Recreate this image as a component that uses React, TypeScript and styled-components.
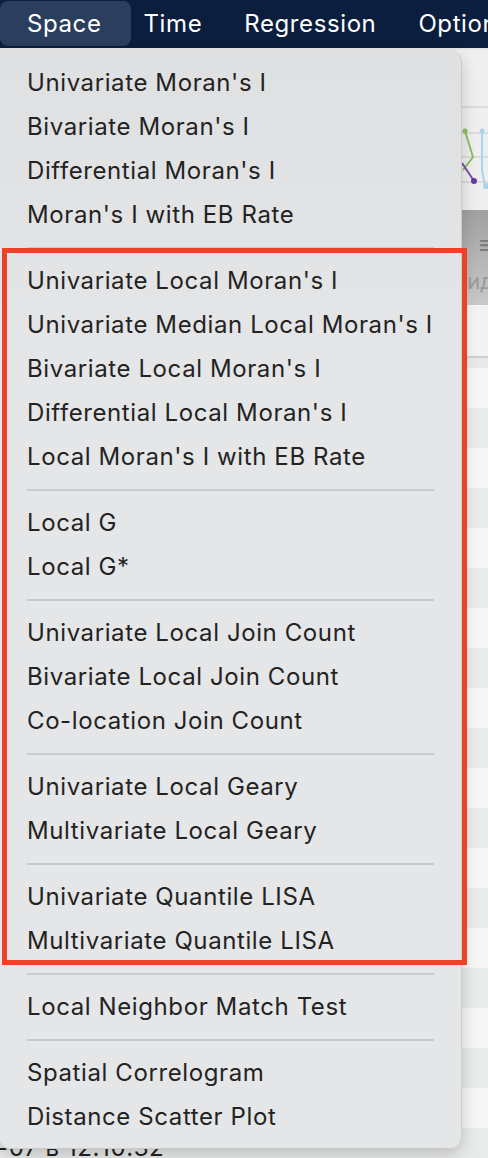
import React from "react";
import styled, { createGlobalStyle } from "styled-components";

const GlobalStyle = createGlobalStyle`
    html, body {
        margin: 0;
        padding: 0;
        background: #f4f4f4;
        overflow: hidden;
    }
    * {
        box-sizing: border-box;
    }
`;

const Screen = styled.div`
    position: relative;
    width: 488px;
    height: 1158px;
    overflow: hidden;
    font-family: Inter, "Noto Sans", "Liberation Sans", sans-serif;
`;

const MenuBar = styled.div`
    display: flex;
    align-items: center;
    height: 48px;
    padding-left: 6px;
    background-color: #0c1e3d;
    border-bottom: 2px solid #e6e6e6;
    box-sizing: content-box;
`;

const MenuTitle = styled.div<{ $active?: boolean }>`
    position: relative;
    padding: 0 21px;
    line-height: 46px;
    font-size: 24px;
    letter-spacing: 0.6px;
    color: #ffffff;
    white-space: nowrap;

    &::before {
        content: "";
        display: ${(p) => (p.$active ? "block" : "none")};
        position: absolute;
        top: 0;
        bottom: 1px;
        left: -6px;
        right: -8px;
        border-radius: 8px;
        background-color: #2c3e5e;
        z-index: 0;
    }

    span {
        position: relative;
    }
`;

const Workspace = styled.div`
    display: flex;
    flex-direction: column;
`;

const ChartArea = styled.div`
    height: 160px;
    background-color: #efefef;
`;

const Toolbar = styled.div`
    display: flex;
    flex-direction: column;
    align-items: flex-end;
    height: 95px;
    padding: 22px 0 0 0;
    background: linear-gradient(#a0a0a0, #c9c9c9);
`;

const ToolIcons = styled.div`
    font-size: 26px;
    line-height: 26px;
    color: #7a7a7a;
    letter-spacing: 6px;
    margin-right: -12px;
`;

const ToolHint = styled.div`
    margin-top: 10px;
    margin-right: -6px;
    font-size: 22px;
    color: #9a9a9a;
`;

const TableHead = styled.div`
    height: 53px;
    background-color: #f3f3f3;
    border-bottom: 2px solid #cfcfcf;
`;

const HeadShade = styled.div`
    height: 10px;
    background-color: #e9e9e9;
`;

const TableRow = styled.div<{ $shade: boolean }>`
    height: 40px;
    background-color: ${(p) => (p.$shade ? "#e9eaea" : "#f6f6f6")};
    font-size: 24px;
    line-height: 40px;
    letter-spacing: 0.6px;
    color: #222222;
    margin-left: -3px;
    white-space: nowrap;
`;

const Menu = styled.div`
    position: absolute;
    top: 50px;
    left: -2px;
    width: 464px;
    padding: 11px 0 9px 0;
    background: linear-gradient(#dfe0e2, #e5e6e8 30%, #e5e6e8);
    border: 1px solid rgba(0, 0, 0, 0.1);
    border-top: none;
    border-radius: 0 12px 12px 12px;
    box-shadow: 0 6px 16px rgba(0, 0, 0, 0.18);
`;

const MenuItem = styled.div`
    height: 44px;
    padding-left: 28px;
    line-height: 44px;
    font-size: 24px;
    letter-spacing: 0.6px;
    color: #232323;
    white-space: nowrap;
`;

const Separator = styled.div`
    height: 22px;
    display: flex;
    align-items: center;
    padding: 0 27px 0 28px;

    &::after {
        content: "";
        flex: 1;
        height: 2px;
        background-color: #c9cacc;
    }
`;

const Annotation = styled.div`
    position: absolute;
    top: 248px;
    left: 2px;
    width: 465px;
    height: 717px;
    border: 5px solid #ec4226;
    pointer-events: none;
`;

const groups: string[][] = [
    [
        "Univariate Moran's I",
        "Bivariate Moran's I",
        "Differential Moran's I",
        "Moran's I with EB Rate",
    ],
    [
        "Univariate Local Moran's I",
        "Univariate Median Local Moran's I",
        "Bivariate Local Moran's I",
        "Differential Local Moran's I",
        "Local Moran's I with EB Rate",
    ],
    ["Local G", "Local G*"],
    [
        "Univariate Local Join Count",
        "Bivariate Local Join Count",
        "Co-location Join Count",
    ],
    ["Univariate Local Geary", "Multivariate Local Geary"],
    ["Univariate Quantile LISA", "Multivariate Quantile LISA"],
    ["Local Neighbor Match Test"],
    ["Spatial Correlogram", "Distance Scatter Plot"],
];

function ChartThumb() {
    // only the right edge of the chart peeks out from behind the menu
    return (
        <svg width="488" height="160" viewBox="0 0 488 160">
            {[57, 83, 107, 132].map((y) => (
                <line key={y} x1="0" y1={y} x2="488" y2={y} stroke="#d6d6d6" strokeWidth="1.5" />
            ))}
            <polyline points="465,81 473,107 463,120" fill="none" stroke="#8cc063" strokeWidth="2" />
            <circle cx="465" cy="81" r="2.5" fill="#8cc063" />
            <polyline points="462,113 474,131" fill="none" stroke="#7b4fa8" strokeWidth="2" />
            <circle cx="474" cy="131" r="3" fill="#6a3aa0" />
            <polyline points="482,81 482,120 485,136" fill="none" stroke="#a9d6ee" strokeWidth="2" />
            <circle cx="482" cy="81" r="2.5" fill="#a9d6ee" />
            <circle cx="486" cy="136" r="3" fill="#a9d6ee" />
        </svg>
    );
}

export default function App() {
    const rows = Array.from({ length: 20 }, (_, i) => i);

    return (
        <Screen>
            <GlobalStyle />
            <MenuBar>
                <MenuTitle $active>
                    <span>Space</span>
                </MenuTitle>
                <MenuTitle>
                    <span>Time</span>
                </MenuTitle>
                <MenuTitle>
                    <span>Regression</span>
                </MenuTitle>
                <MenuTitle>
                    <span>Options</span>
                </MenuTitle>
            </MenuBar>

            <Workspace>
                <ChartArea>
                    <ChartThumb />
                </ChartArea>
                <Toolbar>
                    <ToolIcons>≡ ≡</ToolIcons>
                    <ToolHint>ид</ToolHint>
                </Toolbar>
                <TableHead />
                <HeadShade />
                {rows.map((i) => (
                    <TableRow key={i} $shade={i % 2 === 1}>
                        {i === 19 ? "-07 в 12:10:32" : ""}
                    </TableRow>
                ))}
            </Workspace>

            <Menu>
                {groups.map((group, gi) => (
                    <React.Fragment key={gi}>
                        {gi > 0 && <Separator />}
                        {group.map((label) => (
                            <MenuItem key={label}>{label}</MenuItem>
                        ))}
                    </React.Fragment>
                ))}
            </Menu>

            <Annotation />
        </Screen>
    );
}
